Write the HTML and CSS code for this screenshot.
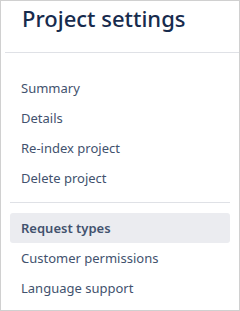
FILE: index.html
```html
<!DOCTYPE html>
<html lang="en">
<head>
    <meta charset="UTF-8">
    <meta name="viewport" content="width=device-width, initial-scale=1.0">
    <title>Project settings</title>
    <link rel="stylesheet" href="styles.css">
</head>
<body>

<div class="sidebar">
    <div class="header">
        <h1>Project settings</h1>
    </div>
    <ul class="menu">
        <li>Summary</li>
        <li>Details</li>
        <li>Re-index project</li>
        <li>Delete project</li>
    </ul>
    <hr class="divider">
    <ul class="menu">
        <li class="active">Request types</li>
        <li>Customer permissions</li>
        <li>Language support</li>
    </ul>
</div>

</body>
</html>
```
FILE: styles.css
```css
body {
    margin: 0;
    font-family: "Noto Sans", "Open Sans", sans-serif;
    background-color: white;
}
.sidebar {
    width: 240px;
    height: 311px;
    box-sizing: border-box;
    border: 1px solid #d0d0d0;
    overflow: hidden;
}
.header {
    margin-left: 4px;
    height: 51px;
    border-bottom: 1px solid #dfe1e6;
}
h1 {
    margin: 0;
    padding-left: 17px;
    font-size: 22px;
    font-weight: 500;
    line-height: 34px;
    color: #172b4d;
}
.menu {
    list-style: none;
    margin: 0;
    padding: 0 9px;
}
.menu:first-of-type {
    margin-top: 20px;
}
.menu li {
    height: 30px;
    line-height: 30px;
    padding-left: 11px;
    font-size: 13px;
    color: #42526e;
    border-radius: 3px;
}
.menu li.active {
    background-color: #ebecf0;
    font-weight: 600;
}
.divider {
    margin: 9px 9px 10px;
    border: 0;
    border-top: 1px solid #dfe1e6;
}
```
